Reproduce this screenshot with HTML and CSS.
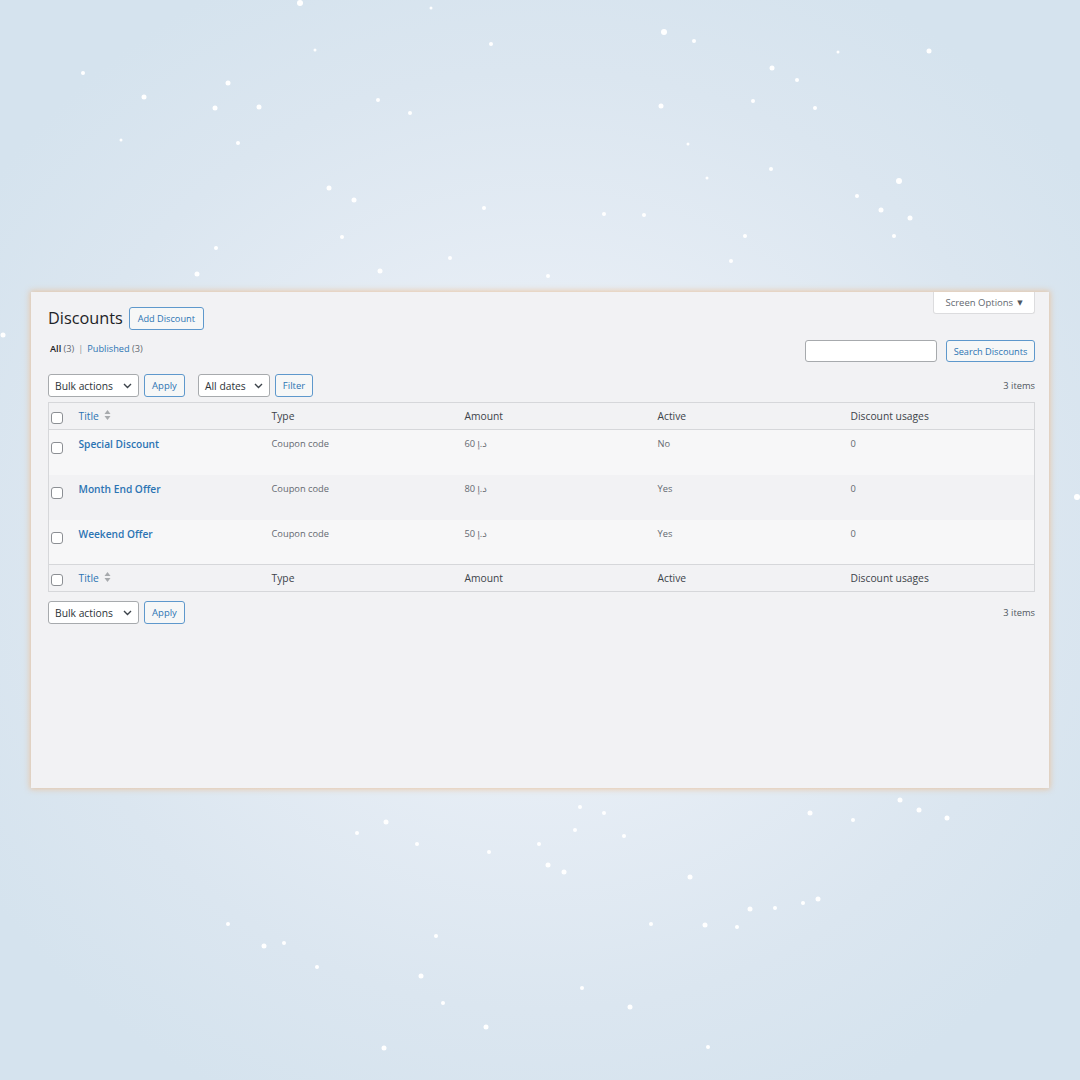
FILE: index.html
```html
<!DOCTYPE html>
<html lang="en">
<head>
<meta charset="utf-8">
<title>Discounts</title>
<link rel="stylesheet" href="styles.css">
</head>
<body>
<div class="stage">
  <svg class="snow" width="1080" height="1080" viewBox="0 0 1080 1080" aria-hidden="true">
    <g fill="#ffffff">
      <circle cx="300" cy="3" r="3"/><circle cx="431" cy="8" r="1.5"/><circle cx="664" cy="32" r="3"/>
      <circle cx="694" cy="41" r="2"/><circle cx="491" cy="44" r="2"/><circle cx="315" cy="50" r="1.5"/>
      <circle cx="83" cy="73" r="2"/><circle cx="228" cy="83" r="2.5"/><circle cx="144" cy="97" r="2.5"/>
      <circle cx="378" cy="100" r="2"/><circle cx="215" cy="108" r="2.5"/><circle cx="259" cy="107" r="2.5"/>
      <circle cx="410" cy="113" r="2"/><circle cx="661" cy="106" r="2.5"/><circle cx="753" cy="101" r="2"/>
      <circle cx="772" cy="68" r="2.5"/><circle cx="797" cy="80" r="2"/><circle cx="838" cy="52" r="1.5"/>
      <circle cx="929" cy="51" r="2.5"/><circle cx="815" cy="108" r="2"/><circle cx="899" cy="181" r="3"/>
      <circle cx="881" cy="210" r="2.5"/><circle cx="910" cy="218" r="2.5"/><circle cx="857" cy="196" r="2"/>
      <circle cx="329" cy="188" r="2.5"/><circle cx="354" cy="200" r="2.5"/><circle cx="604" cy="214" r="2"/>
      <circle cx="644" cy="215" r="2"/><circle cx="238" cy="143" r="2"/><circle cx="121" cy="140" r="1.5"/>
      <circle cx="216" cy="248" r="2"/><circle cx="197" cy="274" r="2.5"/><circle cx="342" cy="237" r="2"/>
      <circle cx="380" cy="271" r="2.5"/><circle cx="450" cy="258" r="2"/><circle cx="484" cy="208" r="2"/>
      <circle cx="548" cy="276" r="2"/><circle cx="731" cy="261" r="2"/><circle cx="745" cy="236" r="2"/>
      <circle cx="894" cy="236" r="2"/><circle cx="688" cy="144" r="1.5"/><circle cx="771" cy="169" r="2"/>
      <circle cx="1077" cy="497" r="3"/><circle cx="3" cy="335" r="2.5"/><circle cx="707" cy="178" r="1.5"/>
      <circle cx="386" cy="822" r="2.5"/><circle cx="357" cy="833" r="2"/><circle cx="417" cy="844" r="2"/>
      <circle cx="489" cy="852" r="2"/><circle cx="539" cy="844" r="2"/><circle cx="564" cy="872" r="2.5"/>
      <circle cx="624" cy="836" r="2"/><circle cx="750" cy="909" r="2.5"/><circle cx="818" cy="899" r="2.5"/>
      <circle cx="690" cy="877" r="2.5"/><circle cx="651" cy="924" r="2"/><circle cx="705" cy="925" r="2.5"/>
      <circle cx="737" cy="927" r="2"/><circle cx="775" cy="908" r="2"/><circle cx="803" cy="903" r="2"/>
      <circle cx="264" cy="946" r="2.5"/><circle cx="284" cy="943" r="2"/><circle cx="421" cy="976" r="2.5"/>
      <circle cx="486" cy="1027" r="2.5"/><circle cx="630" cy="1007" r="2.5"/><circle cx="582" cy="988" r="2"/>
      <circle cx="384" cy="1048" r="2.5"/><circle cx="436" cy="936" r="2"/><circle cx="548" cy="865" r="2.5"/>
      <circle cx="604" cy="813" r="2"/><circle cx="900" cy="800" r="2.5"/><circle cx="853" cy="820" r="2"/>
      <circle cx="580" cy="807" r="2"/><circle cx="228" cy="924" r="2"/><circle cx="317" cy="967" r="2"/>
      <circle cx="443" cy="1003" r="2"/><circle cx="708" cy="1047" r="2"/><circle cx="810" cy="813" r="2.5"/>
      <circle cx="919" cy="810" r="2.5"/><circle cx="947" cy="818" r="2.5"/><circle cx="575" cy="830" r="2"/>
    </g>
  </svg>

  <main class="panel">
    <div class="screen-options">Screen Options <span class="caret">▼</span></div>

    <div class="heading-row">
      <h1 class="page-title">Discounts</h1>
      <a class="btn btn-add">Add Discount</a>
    </div>

    <div class="filter-row">
      <ul class="subsubsub">
        <li><span class="current">All</span> <span class="count">(3)</span></li>
        <li class="sep">|</li>
        <li><a class="link">Published</a> <span class="count">(3)</span></li>
      </ul>
      <div class="search-box">
        <span class="input"></span>
        <a class="btn btn-search">Search Discounts</a>
      </div>
    </div>

    <div class="tablenav">
      <div class="actions">
        <div class="select select-bulk"><span>Bulk actions</span>
          <svg class="chev" width="9" height="6" viewBox="0 0 9 6"><path d="M1 1l3.5 3.5L8 1" fill="none" stroke="#3c434a" stroke-width="1.4"/></svg>
        </div>
        <a class="btn btn-small">Apply</a>
        <div class="select select-dates"><span>All dates</span>
          <svg class="chev" width="9" height="6" viewBox="0 0 9 6"><path d="M1 1l3.5 3.5L8 1" fill="none" stroke="#3c434a" stroke-width="1.4"/></svg>
        </div>
        <a class="btn btn-small btn-filter">Filter</a>
      </div>
      <span class="items">3 items</span>
    </div>

    <table class="list">
      <colgroup>
        <col class="c-check"><col class="c-col"><col class="c-col"><col class="c-col"><col class="c-col"><col>
      </colgroup>
      <thead>
        <tr>
          <th class="check"><span class="cb"></span></th>
          <th><a class="link">Title</a>
            <svg class="sort" width="7" height="12" viewBox="0 0 7 12"><path d="M3.5 1L6.5 5H0.5z M3.5 11L0.5 7h6z" fill="#a7aaad"/></svg>
          </th>
          <th>Type</th>
          <th>Amount</th>
          <th>Active</th>
          <th>Discount usages</th>
        </tr>
      </thead>
      <tbody>
        <tr class="alt">
          <td class="check"><span class="cb"></span></td>
          <td><a class="row-title">Special Discount</a></td>
          <td>Coupon code</td>
          <td>60 <span dir="rtl">د.إ</span></td>
          <td>No</td>
          <td>0</td>
        </tr>
        <tr>
          <td class="check"><span class="cb"></span></td>
          <td><a class="row-title">Month End Offer</a></td>
          <td>Coupon code</td>
          <td>80 <span dir="rtl">د.إ</span></td>
          <td>Yes</td>
          <td>0</td>
        </tr>
        <tr class="alt">
          <td class="check"><span class="cb"></span></td>
          <td><a class="row-title">Weekend Offer</a></td>
          <td>Coupon code</td>
          <td>50 <span dir="rtl">د.إ</span></td>
          <td>Yes</td>
          <td>0</td>
        </tr>
      </tbody>
      <tfoot>
        <tr>
          <th class="check"><span class="cb"></span></th>
          <th><a class="link">Title</a>
            <svg class="sort" width="7" height="12" viewBox="0 0 7 12"><path d="M3.5 1L6.5 5H0.5z M3.5 11L0.5 7h6z" fill="#a7aaad"/></svg>
          </th>
          <th>Type</th>
          <th>Amount</th>
          <th>Active</th>
          <th>Discount usages</th>
        </tr>
      </tfoot>
    </table>

    <div class="tablenav tablenav-bottom">
      <div class="actions">
        <div class="select select-bulk"><span>Bulk actions</span>
          <svg class="chev" width="9" height="6" viewBox="0 0 9 6"><path d="M1 1l3.5 3.5L8 1" fill="none" stroke="#3c434a" stroke-width="1.4"/></svg>
        </div>
        <a class="btn btn-small">Apply</a>
      </div>
      <span class="items">3 items</span>
    </div>
  </main>
</div>
</body>
</html>
```

FILE: styles.css
```css
* { box-sizing: border-box; }

html, body {
  margin: 0;
  padding: 0;
}

body {
  font-family: "Open Sans", "Noto Sans", "Noto Sans Arabic", "DejaVu Sans", sans-serif;
  font-size: 10px;
  color: #3c434a;
}

.stage {
  position: relative;
  width: 1080px;
  height: 1080px;
  overflow: hidden;
  padding: 292px 31px 0 31px;
  background: radial-gradient(ellipse 62% 58% at 50% 50%, #edf2f8 0%, #e6edf5 40%, #dbe6f0 75%, #d5e3ee 100%);
}

.snow {
  position: absolute;
  left: 0;
  top: 0;
}

.panel {
  position: relative;
  width: 1018px;
  height: 496px;
  background: #f2f2f4;
  padding: 15px 14px 0 17px;
  box-shadow: 0 0 6px 1px rgba(236, 186, 136, 0.75);
}

.screen-options {
  position: absolute;
  top: 0;
  right: 14px;
  width: 102px;
  height: 22px;
  background: #ffffff;
  border: 1px solid #dcdcde;
  border-top: none;
  border-radius: 0 0 3px 3px;
  color: #646970;
  font-size: 9.5px;
  display: flex;
  align-items: center;
  justify-content: center;
  gap: 4px;
}

.screen-options .caret {
  font-size: 7px;
  color: #50575e;
}

.heading-row {
  display: flex;
  align-items: center;
  gap: 6px;
  height: 23px;
}

.page-title {
  margin: 0;
  font-size: 16.3px;
  font-weight: 400;
  color: #1d2327;
  line-height: 23px;
}

.btn {
  display: inline-flex;
  align-items: center;
  justify-content: center;
  height: 23px;
  padding: 0 8px;
  border: 1px solid #5e98cc;
  border-radius: 3px;
  background: #f6f7f7;
  color: #2c74b3;
  font-size: 9.5px;
  white-space: nowrap;
  text-decoration: none;
}

.btn-add {
  width: 75px;
  padding: 0;
  font-size: 9.2px;
}

.filter-row {
  display: flex;
  justify-content: space-between;
  align-items: flex-start;
  margin-top: 10px;
  height: 22px;
}

.subsubsub {
  list-style: none;
  margin: 3px 0 0 2px;
  padding: 0;
  display: flex;
  gap: 3px;
  font-size: 9.2px;
  line-height: 12px;
}

.subsubsub .current {
  color: #1d2327;
  font-weight: 600;
}

.subsubsub .count {
  color: #646970;
}

.subsubsub .sep {
  color: #8c8f94;
  padding: 0 1px;
}

.link {
  color: #2c74b3;
  text-decoration: none;
}

.search-box {
  display: flex;
  gap: 9px;
}

.search-box .input {
  display: block;
  width: 132px;
  height: 22px;
  background: #ffffff;
  border: 1px solid #a7aaad;
  border-radius: 3px;
}

.btn-search {
  width: 89px;
  height: 22px;
  padding: 0;
  font-size: 9.2px;
}

.tablenav {
  display: flex;
  justify-content: space-between;
  align-items: center;
  margin-top: 12px;
  height: 23px;
}

.tablenav-bottom {
  margin-top: 9px;
}

.actions {
  display: flex;
  align-items: center;
  gap: 5px;
}

.select {
  position: relative;
  height: 23px;
  display: flex;
  align-items: center;
  justify-content: space-between;
  padding: 0 6px 0 6px;
  background: #ffffff;
  border: 1px solid #a7aaad;
  border-radius: 3px;
  color: #2c3338;
  font-size: 10.3px;
}

.select-bulk { width: 91px; }
.select-dates { width: 72px; margin-left: 8px; }

.btn-small {
  width: 41px;
  padding: 0;
}

.btn-filter {
  width: 38px;
}

.items {
  color: #50575e;
  font-size: 9.3px;
}

.list {
  margin-top: 5px;
  width: 987px;
  border-collapse: collapse;
  table-layout: fixed;
  border: 1px solid #d6d7da;
}

.c-check { width: 23px; }
.c-col { width: 193px; }

.list th {
  height: 27px;
  padding: 0 7px;
  text-align: left;
  font-weight: 400;
  font-size: 10.3px;
  color: #3c434a;
  vertical-align: middle;
  white-space: nowrap;
}

.list thead tr {
  border-bottom: 1px solid #d6d7da;
}

.list tfoot tr {
  border-top: 1px solid #d6d7da;
}

.list th.check,
.list td.check {
  padding: 0 0 0 2px;
}

.list th.check .cb {
  margin-top: 4px;
}

.cb {
  display: block;
  width: 12px;
  height: 12px;
  background: #ffffff;
  border: 1px solid #8c8f94;
  border-radius: 3px;
}

.sort {
  vertical-align: -1px;
  margin-left: 2px;
}

.list tbody tr {
  height: 45px;
  background: #f2f2f4;
}

.list tbody tr.alt {
  background: #f7f7f8;
}

.list td {
  padding: 6px 7px 0 7px;
  vertical-align: top;
  font-size: 9.3px;
  line-height: 16px;
  color: #646970;
}

.list td.check {
  padding-top: 12px;
}

.row-title {
  color: #2c74b3;
  font-weight: 600;
  font-size: 10.2px;
}
```
